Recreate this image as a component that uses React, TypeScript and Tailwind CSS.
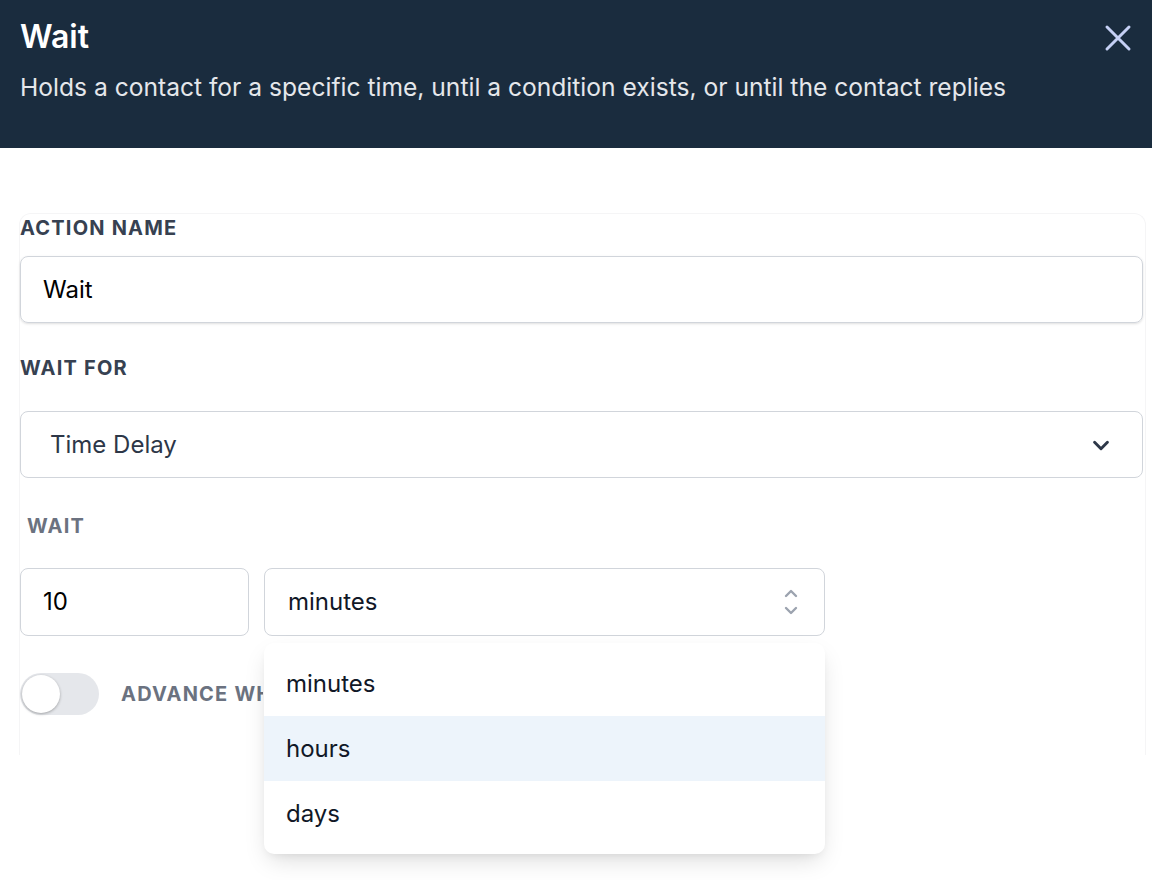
import React from "react";

const font = { fontFamily: "Inter, 'Noto Sans', sans-serif" };

function ChevronDown() {
  return (
    <svg width="22" height="22" viewBox="0 0 24 24" fill="none" stroke="#2d3748" strokeWidth="3.2" strokeLinecap="round" strokeLinejoin="round">
      <path d="M5 9l7 7 7-7" />
    </svg>
  );
}

function UpDown() {
  return (
    <svg width="20" height="30" viewBox="0 0 20 30" fill="none" stroke="#9ca3af" strokeWidth="2.4" strokeLinecap="round" strokeLinejoin="round">
      <path d="M5 9l5-5 5 5" />
      <path d="M5 21l5 5 5-5" />
    </svg>
  );
}

export default function App() {
  return (
    <div className="w-[1152px] h-[880px] bg-white overflow-hidden" style={font}>
      <div className="h-[148px] bg-[#1a2c3e] px-5 pt-[14px] flex justify-between">
        <div>
          <h1 className="text-[32px] leading-[46px] font-semibold text-white">Wait</h1>
          <p className="mt-[11px] text-[24.6px] leading-[32px] text-[#e5e7eb]">
            Holds a contact for a specific time, until a condition exists, or until the contact replies
          </p>
        </div>
        <button className="mt-[9px] mr-[-1px] h-[30px] w-[30px] flex items-center justify-center">
          <svg width="28" height="28" viewBox="0 0 28 28" fill="none" stroke="#c5d0f5" strokeWidth="3" strokeLinecap="round">
            <path d="M3 3l22 22M25 3L3 25" />
          </svg>
        </button>
      </div>

      <div className="mt-[65px] ml-[19px] w-[1127px] rounded-t-xl border-t border-x border-[#f5f5f6] pb-10">
        <label className="block text-[20px] leading-[28px] font-bold tracking-[0.06em] text-[#374151]">
          ACTION NAME
        </label>
        <div className="mt-[14px] w-[1123px] h-[67px] rounded-lg border border-[#d1d5db] shadow-sm flex items-center px-[22px] text-[24px] text-black">
          Wait
        </div>

        <label className="block mt-[31px] text-[20px] leading-[28px] font-bold tracking-[0.06em] text-[#374151]">
          WAIT FOR
        </label>
        <div className="mt-[29px] w-[1123px] h-[67px] rounded-lg border border-[#d1d5db] flex items-center justify-between pl-[29px] pr-[30px] text-[24px] text-[#2d3748]">
          <span>Time Delay</span>
          <ChevronDown />
        </div>

        <label className="block mt-[34px] pl-[7px] text-[20px] leading-[28px] font-bold tracking-[0.06em] text-[#6b7280]">
          WAIT
        </label>
        <div className="mt-[28px] flex gap-[15px]">
          <div className="w-[229px] h-[68px] rounded-lg border border-[#d1d5db] flex items-center px-[22px] text-[24px] text-black">
            10
          </div>
          <div className="relative w-[561px]">
            <div className="h-[68px] rounded-lg border border-[#d1d5db] flex items-center justify-between pl-[23px] pr-[23px] text-[24px] text-[#111827]">
              <span>minutes</span>
              <UpDown />
            </div>
            <div className="absolute z-10 left-0 top-[75px] w-[561px] rounded-[10px] bg-white shadow-[0_10px_25px_-5px_rgba(0,0,0,0.15),0_4px_10px_-4px_rgba(0,0,0,0.08)] py-[8px] text-[24px] text-[#111827]">
              <div className="h-[65px] flex items-center px-[22px]">minutes</div>
              <div className="h-[65px] flex items-center px-[22px] bg-[#edf4fb]">hours</div>
              <div className="h-[65px] flex items-center px-[22px]">days</div>
            </div>
          </div>
        </div>

        <div className="mt-[37px] flex items-center gap-[22px]">
          <div className="w-[79px] h-[42px] rounded-full bg-[#e5e7eb] p-[2px] flex items-center">
            <div className="w-[38px] h-[38px] rounded-full bg-white shadow-[0_1px_3px_rgba(0,0,0,0.3)]" />
          </div>
          <span className="w-[142px] overflow-hidden whitespace-nowrap text-[20px] leading-[28px] font-bold tracking-[0.06em] text-[#6b7280]">
            ADVANCE WHEN CONTACT REPLIES
          </span>
        </div>
      </div>
    </div>
  );
}
